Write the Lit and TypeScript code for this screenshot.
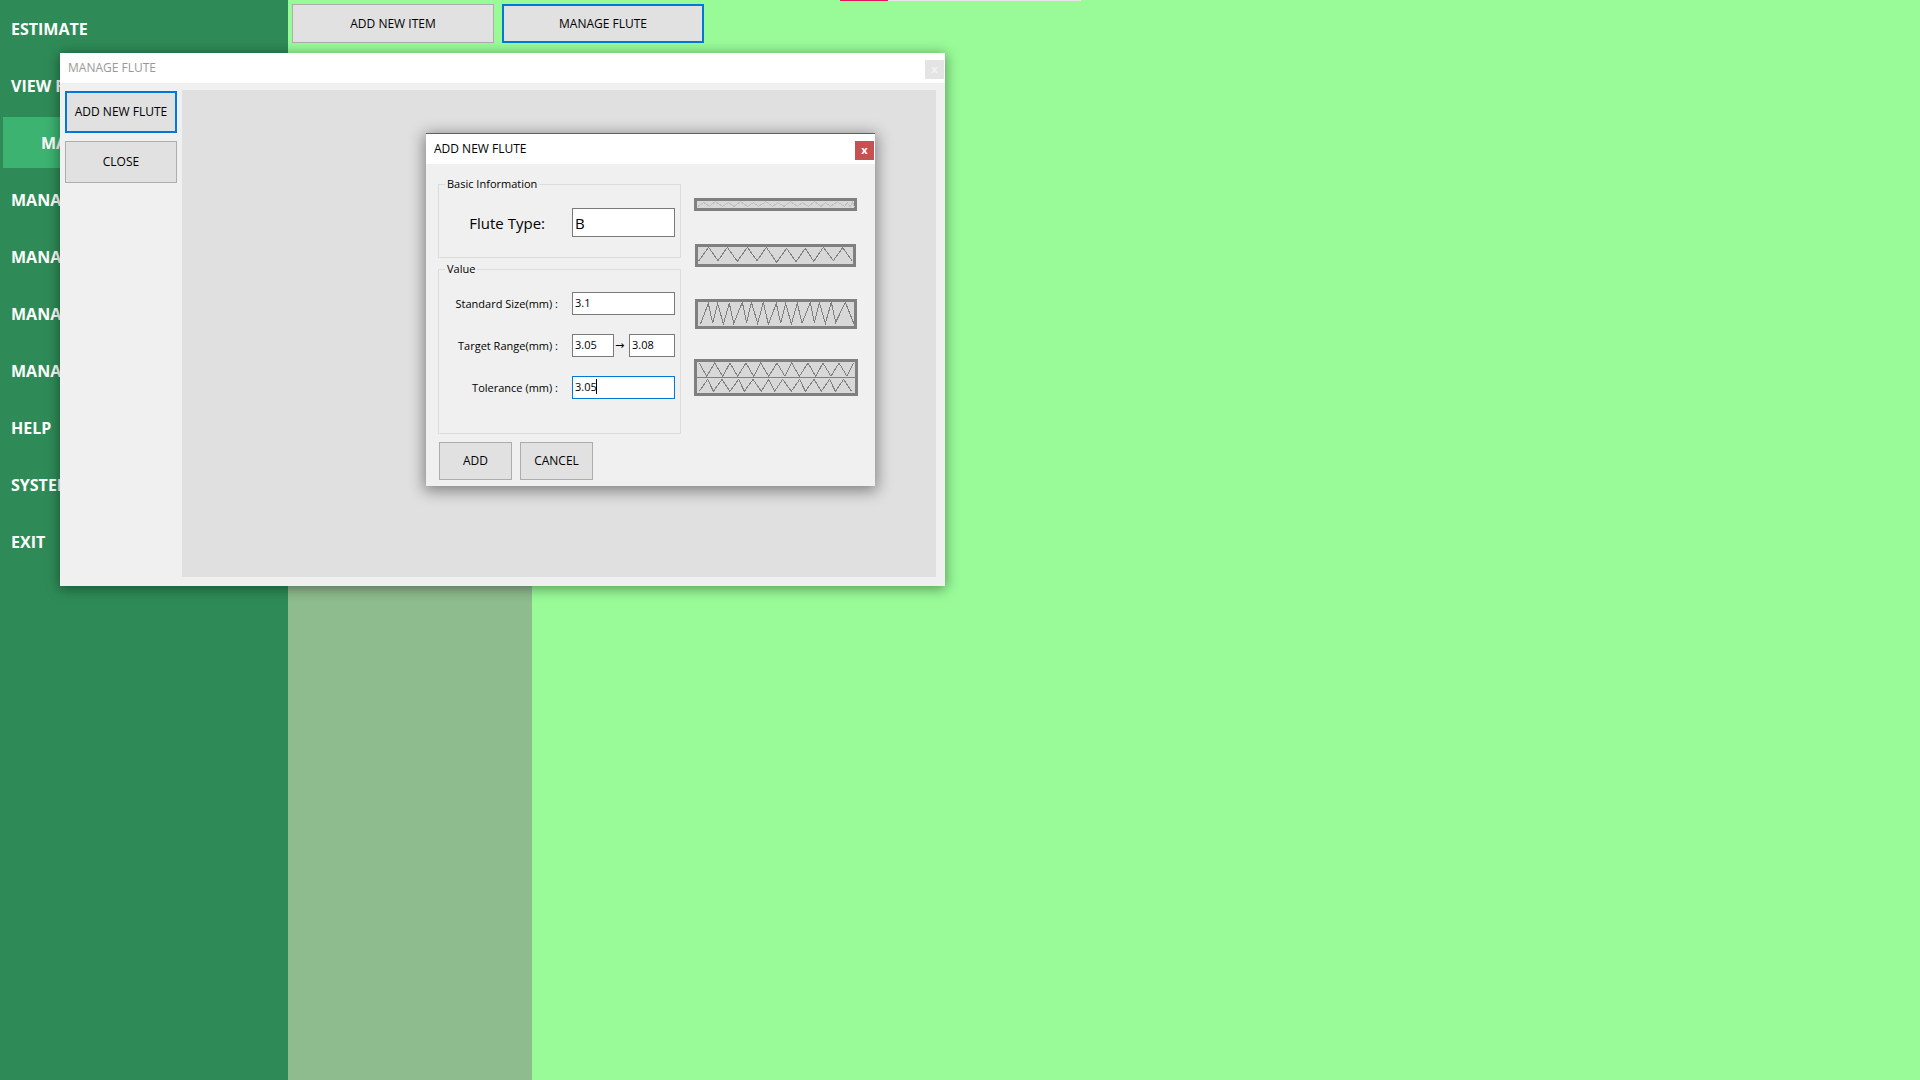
import { LitElement, html, css, svg } from "lit";
import { customElement } from "lit/decorators.js";
import { classMap } from "lit/directives/class-map.js";

interface MenuEntry {
  label: string;
  active?: boolean;
}

const MENU: MenuEntry[] = [
  { label: "ESTIMATE" },
  { label: "VIEW F" },
  { label: "MANAGE", active: true },
  { label: "MANAGE" },
  { label: "MANAGE" },
  { label: "MANAGE" },
  { label: "MANAGE" },
  { label: "HELP" },
  { label: "SYSTEM" },
  { label: "EXIT" },
];

const controls = css`
  button,
  input {
    box-sizing: border-box;
    margin: 0;
    border-radius: 0;
    font-family: inherit;
    color: inherit;
  }
  .btn {
    padding: 0;
    border: 1px solid #adadad;
    background: #e1e1e1;
    font-size: 12px;
    line-height: 16px;
    color: #000;
    white-space: nowrap;
  }
  .btn.current {
    border: 2px solid #0078d7;
  }
  .titlebar {
    display: flex;
    align-items: flex-start;
    justify-content: space-between;
    height: 30px;
    box-sizing: border-box;
    padding: 7px 1px 0 8px;
    background: #fff;
    font-size: 12px;
    line-height: 16px;
  }
  .title {
    margin: 0;
    font-size: 12px;
    font-weight: 400;
  }
  .close {
    width: 19px;
    height: 19px;
    padding: 0 0 2px;
    border: 0;
    background: #e4e4e4;
    color: #f2f2f2;
    font-size: 11px;
    font-weight: 700;
    line-height: 17px;
  }
`;

/** Cross-sections of the available board profiles. */
@customElement("flute-samples")
export class FluteSamples extends LitElement {
  static styles = css`
    :host {
      display: flex;
      flex-direction: column;
      align-items: flex-start;
    }
    svg {
      display: block;
      width: 164px;
      shape-rendering: crispEdges;
      fill: none;
      stroke: #808080;
      stroke-width: 3;
    }
    .frame {
      fill: #d8d8d8;
      stroke-width: 9;
    }
    .faint {
      stroke: #c0c0c0;
    }
    .micro {
      height: 13px;
      margin-bottom: 33px;
    }
    .low {
      height: 23px;
      margin-bottom: 32px;
    }
    .tall {
      height: 30px;
      margin-bottom: 30px;
    }
    .double {
      height: 37px;
    }
  `;

  render() {
    return html`
      <svg class="micro" viewBox="0 0 492 39" role="img" aria-label="Micro flute">
        ${svg`<rect class="frame" x="4.5" y="4.5" width="480" height="30"/>
        <polyline class="faint" points="12,25 29,13 46,25 64,11 86,25 103,14 120,25 139,11 161,25 178,14 194,25 215,11 236,25 251,14 270,25 290,11 310,25 325,14 343,25 362,11 381,25 394,14 410,25 430,11 452,26 460,14 468,26 475,12 481,26"/>`}
      </svg>
      <svg class="low" viewBox="0 0 492 69" role="img" aria-label="Low flute">
        ${svg`<rect class="frame" x="7.5" y="4.5" width="474" height="60"/>
        <polyline points="13,52 44,10 72,50 100,10 130,52 160,10 189,50 217,10 248,55 278,13 306,53 334,13 359,52 388,10 418,50 446,11 474,50"/>`}
      </svg>
      <svg class="tall" viewBox="0 0 492 90" role="img" aria-label="Tall flute">
        ${svg`<rect class="frame" x="7.5" y="4.5" width="477" height="81"/>
        <polyline points="19,76 43,13 56,73 71,13 88,75 106,13 119,73 145,10 158,71 172,10 191,73 208,10 223,76 247,13 260,73 275,13 292,75 310,13 324,73 349,10 361,71 376,10 394,73 412,10 425,70 454,10 480,75"/>`}
      </svg>
      <svg class="double" viewBox="0 0 492 111" role="img" aria-label="Double flute">
        ${svg`<rect class="frame" x="4.5" y="4.5" width="483" height="102"/>
        <path d="M9 55.5H483"/>
        <polyline points="16,12 38,52 62,12 86,52 108,12 131,52 156,12 179,52 200,12 224,52 249,12 273,52 293,12 316,52 342,12 365,52 387,12 411,52 435,12 459,52 479,12"/>
        <polyline points="16,97 41,61 58,97 84,61 108,97 134,61 151,97 177,61 202,97 224,61 242,97 266,61 292,97 317,61 334,97 360,61 382,97 407,61 424,97 449,61 473,97"/>`}
      </svg>
    `;
  }
}

@customElement("add-flute-dialog")
export class AddFluteDialog extends LitElement {
  static styles = [
    controls,
    css`
      :host {
        display: block;
        color: #000;
      }
      .dialog {
        border-top: 1px solid #606060;
        background: #f0f0f0;
        box-shadow: 0 3px 14px 2px rgba(0, 0, 0, 0.42);
      }
      .close {
        margin: 0;
        background: #c75050;
        color: #fff;
      }
      .content {
        display: flex;
        gap: 13px;
        padding: 12px 17px 6px 12px;
      }
      form {
        flex: 1;
      }
      fieldset {
        box-sizing: border-box;
        margin: 0;
        padding: 0 5px;
        border: 1px solid #dcdcdc;
        min-width: 0;
      }
      legend {
        margin-left: 1px;
        padding: 0 2px;
        font-size: 11px;
        line-height: 16px;
      }
      .basic {
        height: 82px;
        padding-top: 16px;
      }
      .value {
        height: 173px;
        margin-top: 3px;
        padding-top: 15px;
      }
      .row {
        display: grid;
        grid-template-columns: 1fr 103px;
        column-gap: 14px;
        align-items: center;
      }
      .value .row {
        margin-bottom: 19px;
      }
      .row > label {
        justify-self: end;
        font-size: 11px;
        line-height: 16px;
        white-space: nowrap;
      }
      .row > .large {
        padding-right: 13px;
        font-size: 15px;
        line-height: 24px;
      }
      input {
        width: 100%;
        height: 23px;
        padding: 0 2px 2px;
        border: 1px solid #7a7a7a;
        background: #fff;
        font-size: 11px;
        outline: none;
      }
      .large-input {
        height: 29px;
        padding: 0 2px;
        font-size: 15px;
      }
      .range {
        display: grid;
        grid-template-columns: 42px 15px 46px;
        align-items: center;
      }
      .arrow {
        text-align: left;
        padding-left: 1px;
        font-family: "DejaVu Sans", sans-serif;
        font-size: 11px;
        line-height: 16px;
      }
      .editing {
        position: relative;
        display: flex;
      }
      .editing input {
        border-color: #0078d7;
      }
      .caret {
        position: absolute;
        top: 3px;
        left: 24px;
        width: 1px;
        height: 15px;
        background: #000;
      }
      .actions {
        display: flex;
        gap: 8px;
        padding: 8px 1px 0;
      }
      .actions .btn {
        width: 73px;
        height: 38px;
      }
      flute-samples {
        padding-top: 22px;
      }
    `,
  ];

  render() {
    return html`
      <section class="dialog" role="dialog" aria-labelledby="dialog-title">
        <header class="titlebar">
          <h2 class="title" id="dialog-title">ADD NEW FLUTE</h2>
          <button class="close" type="button">x</button>
        </header>
        <div class="content">
          <form @submit=${(e: Event) => e.preventDefault()}>
            <fieldset class="basic">
              <legend>Basic Information</legend>
              <div class="row">
                <label class="large" for="type">Flute Type:</label>
                <input class="large-input" id="type" type="text" .value=${"B"} />
              </div>
            </fieldset>
            <fieldset class="value">
              <legend>Value</legend>
              <div class="row">
                <label for="size">Standard Size(mm) :</label>
                <input id="size" type="text" .value=${"3.1"} />
              </div>
              <div class="row">
                <label for="from">Target Range(mm) :</label>
                <div class="range">
                  <input id="from" type="text" .value=${"3.05"} />
                  <label class="arrow" for="to">→</label>
                  <input id="to" type="text" .value=${"3.08"} />
                </div>
              </div>
              <div class="row">
                <label for="tolerance">Tolerance (mm) :</label>
                <div class="editing">
                  <input id="tolerance" type="text" .value=${"3.05"} />
                  <span class="caret"></span>
                </div>
              </div>
            </fieldset>
            <div class="actions">
              <button class="btn" type="submit">ADD</button>
              <button class="btn" type="button">CANCEL</button>
            </div>
          </form>
          <flute-samples></flute-samples>
        </div>
      </section>
    `;
  }
}

@customElement("manage-flute-window")
export class ManageFluteWindow extends LitElement {
  static styles = [
    controls,
    css`
      :host {
        display: block;
      }
      .window {
        display: flex;
        flex-direction: column;
        min-height: 533px;
        background: #f0f0f0;
        box-shadow: 0 2px 12px 1px rgba(0, 0, 0, 0.4);
      }
      .title {
        color: #999;
      }
      .body {
        flex: 1;
        display: flex;
        gap: 5px;
        padding: 7px 9px 9px 5px;
      }
      .side {
        display: flex;
        flex-direction: column;
        gap: 8px;
        width: 112px;
        padding-top: 1px;
      }
      .side .btn {
        height: 42px;
      }
      .canvas {
        flex: 1;
        background: #e0e0e0;
      }
    `,
  ];

  render() {
    return html`
      <section class="window">
        <header class="titlebar">
          <h1 class="title">MANAGE FLUTE</h1>
          <button class="close" type="button">x</button>
        </header>
        <div class="body">
          <div class="side">
            <button class="btn current" type="button">ADD NEW FLUTE</button>
            <button class="btn" type="button">CLOSE</button>
          </div>
          <div class="canvas"></div>
        </div>
      </section>
    `;
  }
}

@customElement("app-root")
export class AppRoot extends LitElement {
  static styles = [
    controls,
    css`
      :host {
        position: relative;
        display: flex;
        min-height: 100vh;
        overflow: hidden;
        background: #98fb98;
        font-family: "Open Sans", "Noto Sans", sans-serif;
      }
      .sidebar {
        display: flex;
        flex-direction: column;
        gap: 6px;
        box-sizing: border-box;
        width: 288px;
        padding: 3px;
        background: #2e8b57;
      }
      .item {
        padding: 14px 8px 13px;
        color: #fff;
        font-size: 16px;
        font-weight: 700;
        line-height: 24px;
        text-decoration: none;
      }
      .item.active {
        padding-left: 38px;
        background: #3cb371;
      }
      .main {
        flex: 1;
        display: flex;
        flex-direction: column;
      }
      .toolbar {
        display: flex;
        gap: 8px;
        padding: 4px 4px 10px;
      }
      .toolbar .btn {
        width: 202px;
        height: 39px;
      }
      .list {
        flex: 1;
        width: 244px;
        background: #8fbc8f;
      }
      .progress {
        position: absolute;
        top: 0;
        left: 840px;
        width: 241px;
        height: 1px;
        background: #e6e6e6;
      }
      .done {
        width: 48px;
        height: 1px;
        background: #e8115b;
      }
      manage-flute-window {
        position: absolute;
        top: 53px;
        left: 60px;
        width: 885px;
      }
      add-flute-dialog {
        position: absolute;
        top: 133px;
        left: 426px;
        width: 449px;
      }
    `,
  ];

  render() {
    return html`
      <nav class="sidebar">
        ${MENU.map(
          (m) => html`<a href="#" class=${classMap({ item: true, active: !!m.active })}>${m.label}</a>`,
        )}
      </nav>
      <main class="main">
        <div class="toolbar">
          <button class="btn" type="button">ADD NEW ITEM</button>
          <button class="btn current" type="button">MANAGE FLUTE</button>
        </div>
        <div class="list"></div>
      </main>
      <div class="progress"><div class="done"></div></div>
      <manage-flute-window></manage-flute-window>
      <add-flute-dialog></add-flute-dialog>
    `;
  }
}
